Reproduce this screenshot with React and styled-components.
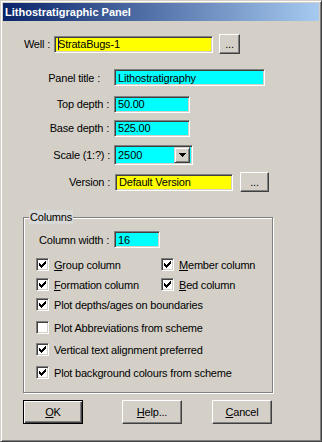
import React from "react";
import styled, { createGlobalStyle } from "styled-components";

const GlobalStyle = createGlobalStyle`
  html, body {
    margin: 0;
    padding: 0;
    background: #d4d0c8;
  }
  body {
    font-family: "Liberation Sans", Arial, sans-serif;
    font-size: 11px;
    color: #000;
  }
`;

const Window = styled.div`
  width: 322px;
  height: 442px;
  box-sizing: border-box;
  background: #d4d0c8;
  border: 1px solid;
  border-color: #d4d0c8 #404040 #404040 #d4d0c8;
  box-shadow: inset 1px 1px #fff, inset -1px -1px #808080;
  padding: 2px;
  display: flex;
  flex-direction: column;
`;

const TitleBar = styled.div`
  height: 18px;
  background: linear-gradient(to right, #0a246a, #a6caf0);
  color: #fff;
  font-weight: bold;
  font-size: 11px;
  padding-left: 2px;
  display: flex;
  align-items: center;
`;

const Row = styled.div`
  display: flex;
  align-items: center;
  height: ${p => p.$h || 17}px;
  margin-top: ${p => p.$top}px;
  margin-left: ${p => p.$left || 0}px;
`;

const Label = styled.div`
  width: ${p => p.$w}px;
  margin-right: ${p => p.$gap}px;
  flex-shrink: 0;
  text-align: right;
  letter-spacing: -0.2px;
  white-space: nowrap;
`;

const Field = styled.div`
  width: ${p => p.$w}px;
  height: 17px;
  box-sizing: border-box;
  background: ${p => p.$bg};
  border: 1px solid;
  border-color: #808080 #fff #fff #808080;
  box-shadow: inset 1px 1px #404040, inset -1px -1px #d4d0c8;
  padding-left: 3px;
  display: flex;
  align-items: center;
  letter-spacing: -0.2px;
  white-space: nowrap;
  overflow: hidden;
`;

const Caret = styled.span`
  display: inline-block;
  width: 1px;
  height: 12px;
  background: #000080;
  margin-right: -1px;
`;

const RaisedButton = styled.div`
  width: ${p => p.$w}px;
  height: ${p => p.$h}px;
  margin-left: ${p => p.$ml || 0}px;
  box-sizing: border-box;
  background: #d4d0c8;
  border: 1px solid;
  border-color: ${p => (p.$default ? "#000" : "#fff #404040 #404040 #fff")};
  box-shadow: ${p =>
    p.$default
      ? "inset 1px 1px #fff, inset -1px -1px #404040, inset -2px -2px #808080"
      : "inset -1px -1px #808080, inset 1px 1px #d4d0c8"};
  display: flex;
  align-items: center;
  justify-content: center;
  letter-spacing: -0.2px;
  flex-shrink: 0;
`;

const Combo = styled.div`
  width: 79px;
  height: 20px;
  box-sizing: border-box;
  background: #00ffff;
  border: 1px solid;
  border-color: #808080 #fff #fff #808080;
  box-shadow: inset 1px 1px #404040, inset -1px -1px #d4d0c8;
  display: flex;
  align-items: center;
  justify-content: space-between;
  padding: 2px 2px 2px 3px;
`;

const DropButton = styled.div`
  width: 16px;
  height: 16px;
  box-sizing: border-box;
  background: #d4d0c8;
  border: 1px solid;
  border-color: #d4d0c8 #404040 #404040 #d4d0c8;
  box-shadow: inset 1px 1px #fff, inset -1px -1px #808080;
  display: flex;
  align-items: center;
  justify-content: center;
`;

const GroupBox = styled.div`
  position: relative;
  margin-left: 20px;
  margin-top: 25px;
  width: 250px;
  box-sizing: border-box;
  border: 1px solid #808080;
  box-shadow: inset 1px 1px #fff, 1px 1px #fff;
  padding: 13px 0 13px 12px;
`;

const Legend = styled.span`
  position: absolute;
  left: 5px;
  top: -8px;
  height: 14px;
  line-height: 14px;
  padding: 0 1px;
  background: #d8d8d6;
  letter-spacing: -0.2px;
`;

const CheckRow = styled.div`
  display: flex;
  margin-top: ${p => p.$top}px;
  height: 13px;
`;

const CheckItem = styled.label`
  display: flex;
  align-items: center;
  width: ${p => (p.$w ? `${p.$w}px` : "auto")};
  height: 13px;
  white-space: nowrap;
  letter-spacing: -0.2px;
`;

const Box = styled.span`
  width: 13px;
  height: 13px;
  box-sizing: border-box;
  background: #fff;
  border: 1px solid;
  border-color: #808080 #fff #fff #808080;
  box-shadow: inset 1px 1px #404040, inset -1px -1px #d4d0c8;
  margin-right: 5px;
  flex-shrink: 0;
  display: flex;
  align-items: center;
  justify-content: center;
`;

const ButtonRow = styled.div`
  display: flex;
  margin-top: 7px;
  margin-left: 20px;
`;

const Key = styled.span`
  text-decoration: underline;
  text-underline-offset: 1px;
`;

const checkRects = [
  [6, 0, 1], [5, 1, 2], [0, 2, 1], [4, 2, 3], [0, 3, 2], [3, 3, 3],
  [0, 4, 5], [1, 5, 3], [2, 6, 1],
];

const CheckMark = () => (
  <svg width="7" height="7" viewBox="0 0 7 7" shapeRendering="crispEdges">
    {checkRects.map(([x, y, w]) => (
      <rect key={`${x}-${y}`} x={x} y={y} width={w} height={1} fill="#000" />
    ))}
  </svg>
);

const Checkbox = ({ checked, w, children }) => (
  <CheckItem $w={w}>
    <Box>{checked && <CheckMark />}</Box>
    <span>{children}</span>
  </CheckItem>
);

const App = () => (
  <>
    <GlobalStyle />
    <Window>
      <TitleBar>Lithostratigraphic Panel</TitleBar>

      <Row $top={13} $h={20}>
        <Label $w={47} $gap={4}>Well :</Label>
        <Field $w={159} $bg="#ffff00">
          <Caret />
          StrataBugs-1
        </Field>
        <RaisedButton $w={21} $h={20} $ml={6}>...</RaisedButton>
      </Row>

      <Row $top={15}>
        <Label $w={97} $gap={14}>Panel title :</Label>
        <Field $w={151} $bg="#00ffff">Lithostratigraphy</Field>
      </Row>

      <Row $top={9} $h={18}>
        <Label $w={106} $gap={5}>Top depth :</Label>
        <Field $w={76} $bg="#00ffff">50.00</Field>
      </Row>

      <Row $top={6} $h={18}>
        <Label $w={106} $gap={5}>Base depth :</Label>
        <Field $w={76} $bg="#00ffff">525.00</Field>
      </Row>

      <Row $top={7} $h={21}>
        <Label $w={107} $gap={4}>Scale (1:?) :</Label>
        <Combo>
          <span>2500</span>
          <DropButton>
            <svg width="7" height="4" viewBox="0 0 7 4" shapeRendering="crispEdges">
              <polygon points="0,0 7,0 3.5,4" fill="#000" />
            </svg>
          </DropButton>
        </Combo>
      </Row>

      <Row $top={7} $h={20}>
        <Label $w={107} $gap={5}>Version :</Label>
        <Field $w={118} $bg="#ffff00">Default Version</Field>
        <RaisedButton $w={29} $h={20} $ml={7}>...</RaisedButton>
      </Row>

      <GroupBox>
        <Legend>Columns</Legend>
        <Row $top={0}>
          <Label $w={73} $gap={5}>Column width :</Label>
          <Field $w={46} $bg="#00ffff">16</Field>
        </Row>
        <CheckRow $top={10}>
          <Checkbox checked w={125}><Key>G</Key>roup column</Checkbox>
          <Checkbox checked><Key>M</Key>ember column</Checkbox>
        </CheckRow>
        <CheckRow $top={7}>
          <Checkbox checked w={125}><Key>F</Key>ormation column</Checkbox>
          <Checkbox checked><Key>B</Key>ed column</Checkbox>
        </CheckRow>
        <CheckRow $top={7}>
          <Checkbox checked>Plot depths/ages on boundaries</Checkbox>
        </CheckRow>
        <CheckRow $top={10}>
          <Checkbox>Plot Abbreviations from scheme</Checkbox>
        </CheckRow>
        <CheckRow $top={9}>
          <Checkbox checked>Vertical text alignment preferred</Checkbox>
        </CheckRow>
        <CheckRow $top={10}>
          <Checkbox checked>Plot background colours from scheme</Checkbox>
        </CheckRow>
      </GroupBox>

      <ButtonRow>
        <RaisedButton $w={60} $h={24} $default><Key>O</Key>K</RaisedButton>
        <RaisedButton $w={60} $h={24} $ml={39}><Key>H</Key>elp...</RaisedButton>
        <RaisedButton $w={60} $h={24} $ml={30}><Key>C</Key>ancel</RaisedButton>
      </ButtonRow>
    </Window>
  </>
);

export default App;
